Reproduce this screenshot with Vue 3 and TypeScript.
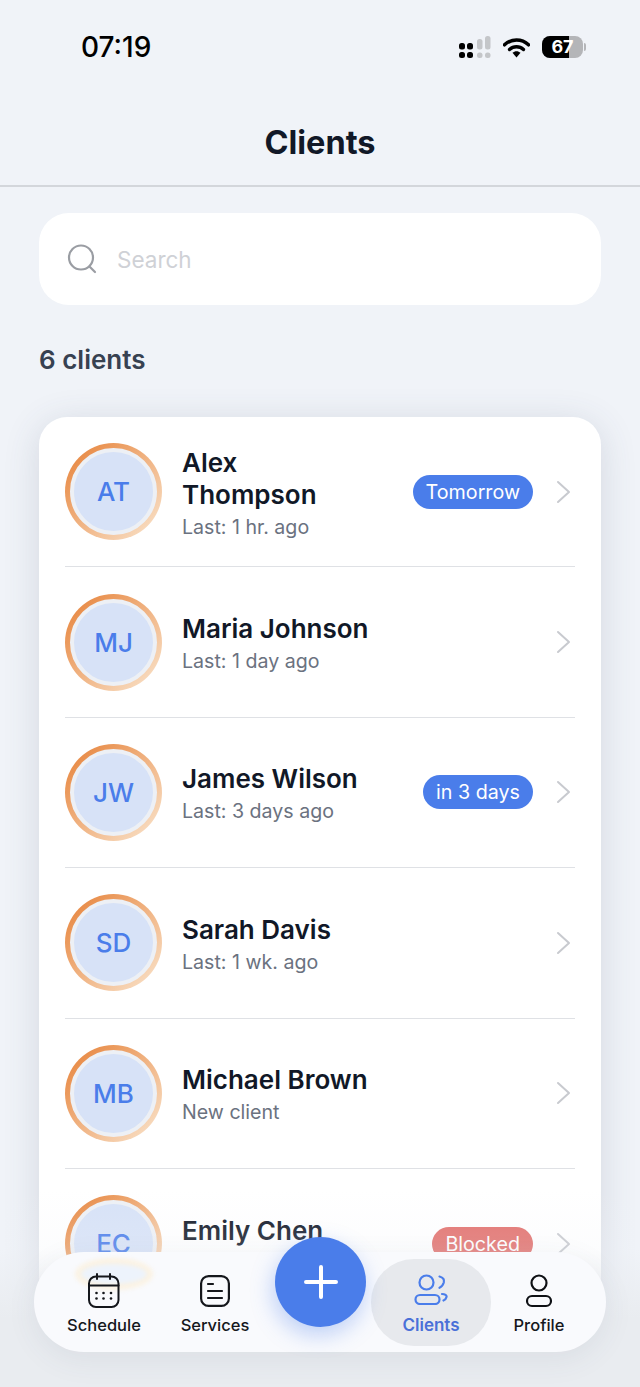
<template>
  <div class="screen">
    <div class="status-bar">
      <span class="time">07:19</span>
      <div class="status-icons">
        <svg width="32" height="22" viewBox="0 0 32 22">
          <rect x="0" y="7" width="6" height="6.500" rx="2.500" fill="#000" />
          <rect x="0" y="16" width="6" height="6" rx="2.500" fill="#000" />
          <rect x="8" y="7" width="6" height="6.500" rx="2.500" fill="#000" />
          <rect x="8" y="16" width="6" height="6" rx="2.500" fill="#000" />
          <rect x="18" y="3" width="5.500" height="10.500" rx="2.500" fill="#c4c6c9" />
          <rect x="18" y="16.500" width="5.500" height="5.500" rx="2.500" fill="#c4c6c9" />
          <rect x="26" y="0" width="5.500" height="13.500" rx="2.500" fill="#c4c6c9" />
          <rect x="26" y="16.500" width="5.500" height="5.500" rx="2.500" fill="#c4c6c9" />
        </svg>
        <svg width="27" height="21" viewBox="0 0 27 21">
          <path d="M1.500 7.800C8.200 1.300 18.800 1.300 25.500 7.800" fill="none" stroke="#000" stroke-width="3.500" stroke-linecap="round" />
          <path d="M6.500 12.500C10.400 8.800 16.600 8.800 20.500 12.500" fill="none" stroke="#000" stroke-width="3.300" stroke-linecap="round" />
          <path d="M9.500 15.800C11.800 13.700 15.200 13.700 17.500 15.800L13.500 20.500Z" fill="#000" />
        </svg>
        <div class="battery">
          <div class="battery-body">
            <div class="battery-fill" :style="{ width: battery + '%' }"></div>
            <span class="battery-num">{{ battery }}</span>
          </div>
          <span class="battery-cap"></span>
        </div>
      </div>
    </div>

    <header class="page-header">
      <h1>Clients</h1>
    </header>

    <main class="content">
      <div class="search">
        <svg width="30" height="30" viewBox="0 0 30 30" fill="none" stroke="#9a9da3" stroke-width="2.200" stroke-linecap="round">
          <circle cx="14" cy="13.500" r="12" />
          <path d="M23 23l5 5" />
        </svg>
        <span class="placeholder">Search</span>
      </div>

      <p class="count">{{ clients.length }} clients</p>

      <section class="card">
        <div v-for="c in clients" :key="c.initials" class="row">
          <div class="avatar">
            <div class="avatar-inner">{{ c.initials }}</div>
          </div>
          <div class="info">
            <div class="name">{{ c.name }}</div>
            <div class="last">{{ c.last }}</div>
          </div>
          <span v-if="c.badge" :class="['badge', c.blocked ? 'badge-red' : '']">{{ c.badge }}</span>
          <svg class="chevron" width="16" height="24" viewBox="0 0 16 24" fill="none" stroke="#c8cacf" stroke-width="2" stroke-linecap="round" stroke-linejoin="round">
            <path d="M2 2l11 10L2 22" />
          </svg>
        </div>
      </section>
    </main>

    <div class="fade"></div>

    <nav class="tabbar">
      <span class="glass-ring"></span>
      <div class="tab tab-schedule">
        <svg width="32" height="35" viewBox="0 0 32 35" fill="none" stroke="#15171c" stroke-width="2" stroke-linecap="round" stroke-linejoin="round">
          <rect x="1" y="3.500" width="29.500" height="30.500" rx="7" />
          <path d="M1 12.500h29.500M9 1v5M22 1v5" />
          <g fill="#15171c" stroke="none">
            <circle cx="8.500" cy="20" r="1.300" /><circle cx="15.500" cy="20" r="1.300" /><circle cx="23" cy="20" r="1.300" />
            <circle cx="8.500" cy="25.500" r="1.300" /><circle cx="15.500" cy="25.500" r="1.300" /><circle cx="23" cy="25.500" r="1.300" />
          </g>
        </svg>
        <span>Schedule</span>
      </div>
      <div class="tab tab-services">
        <svg width="30" height="32" viewBox="0 0 30 32" fill="none" stroke="#15171c" stroke-width="2.200" stroke-linecap="round">
          <rect x="1.100" y="1.100" width="27.800" height="29.800" rx="7.500" />
          <path d="M8 9h5M8 16h14M8 23h14" />
        </svg>
        <span>Services</span>
      </div>
      <div class="tab tab-clients">
        <svg width="34" height="31" viewBox="0 0 34 31" fill="none" stroke="#4a7dea" stroke-width="2.200" stroke-linecap="round">
          <circle cx="12.500" cy="8.500" r="7" />
          <rect x="1.500" y="21" width="24" height="9" rx="4.500" />
          <path d="M25.500 2.500C29.500 3.500 30.500 6 29.800 8.500C29 11 27.500 13 25.500 13.800" />
          <path d="M28 20C31 20 33 21.500 32.500 23C32 25 31 26 29.500 26.500" />
        </svg>
        <span>Clients</span>
      </div>
      <div class="tab tab-profile">
        <svg width="28" height="34" viewBox="0 0 28 34" fill="none" stroke="#0f1115" stroke-width="2.200">
          <circle cx="14" cy="9" r="7.500" />
          <rect x="2" y="22" width="24" height="10" rx="5" />
        </svg>
        <span>Profile</span>
      </div>
    </nav>

    <button class="fab" type="button" aria-label="Add client">
      <svg width="36" height="36" viewBox="0 0 36 36" stroke="#fff" stroke-width="4" stroke-linecap="round">
        <path d="M18 3v30M3 18h30" />
      </svg>
    </button>
  </div>
</template>

<script setup lang="ts">
interface Client {
  initials: string;
  name: string;
  last: string;
  badge?: string;
  blocked?: boolean;
}

const battery = 67;

// the last row's subtitle sits under the tab bar, so it stays empty
const clients: Client[] = [
  { initials: 'AT', name: 'Alex Thompson', last: 'Last: 1 hr. ago', badge: 'Tomorrow' },
  { initials: 'MJ', name: 'Maria Johnson', last: 'Last: 1 day ago' },
  { initials: 'JW', name: 'James Wilson', last: 'Last: 3 days ago', badge: 'in 3 days' },
  { initials: 'SD', name: 'Sarah Davis', last: 'Last: 1 wk. ago' },
  { initials: 'MB', name: 'Michael Brown', last: 'New client' },
  { initials: 'EC', name: 'Emily Chen', last: '', badge: 'Blocked', blocked: true },
];
</script>

<style>
html,
body {
  margin: 0;
  background: #f0f3f8;
}
</style>

<style scoped>
.screen {
  position: relative;
  width: 640px;
  height: 1387px;
  overflow: hidden;
  background: #f0f3f8;
  font-family: Inter, "Noto Sans", sans-serif;
  color: #111827;
}

.status-bar {
  height: 95px;
  box-sizing: border-box;
  padding: 30px 54px 0 81px;
  display: flex;
  justify-content: space-between;
  align-items: flex-start;
}

.time {
  font-size: 28px;
  line-height: 34px;
  font-weight: 500;
  color: #000;
}

.status-icons {
  display: flex;
  align-items: center;
  gap: 12px;
  padding-top: 6px;
}

.status-icons svg {
  display: block;
}

.battery {
  display: flex;
  align-items: center;
  gap: 1px;
}

.battery-body {
  position: relative;
  width: 41px;
  height: 22px;
  border-radius: 8px;
  background: #b4b5b8;
  overflow: hidden;
}

.battery-fill {
  height: 100%;
  background: #000;
}

.battery-num {
  position: absolute;
  inset: 0;
  text-align: center;
  font-size: 18px;
  line-height: 22px;
  font-weight: 700;
  color: #fff;
}

.battery-cap {
  width: 2px;
  height: 8px;
  border-radius: 0 2px 2px 0;
  background: #b4b5b8;
}

.page-header {
  height: 92px;
  box-sizing: border-box;
  border-bottom: 2px solid #d3d6db;
  text-align: center;
}

.page-header h1 {
  margin: 0;
  padding-top: 28px;
  font-size: 32.5px;
  line-height: 40px;
  font-weight: 700;
  color: #111827;
}

.content {
  padding: 26px 39px 0;
}

.search {
  height: 92px;
  box-sizing: border-box;
  padding: 0 28px;
  display: flex;
  align-items: center;
  gap: 20px;
  background: #fff;
  border-radius: 30px;
}

.placeholder {
  font-size: 22.5px;
  color: #cfd1d6;
}

.count {
  margin: 39px 0 41px;
  font-size: 26px;
  line-height: 32px;
  font-weight: 600;
  color: #374151;
}

.card {
  padding: 0 26px;
  background: #fff;
  border-radius: 28px;
  box-shadow: 0 6px 36px rgba(60, 72, 100, 0.16);
}

.row {
  height: 150.4px;
  box-sizing: border-box;
  display: flex;
  align-items: center;
  border-bottom: 1px solid #dfe1e5;
}

.avatar {
  flex: none;
  width: 97px;
  height: 97px;
  box-sizing: border-box;
  padding: 5px;
  border-radius: 50%;
  background: linear-gradient(135deg, #e88a45 10%, #f8dcc0 90%);
}

.avatar-inner {
  width: 87px;
  height: 87px;
  box-sizing: border-box;
  border: 4.5px solid #edf0f5;
  border-radius: 50%;
  background: #d7e2f7;
  display: flex;
  align-items: center;
  justify-content: center;
  font-size: 26px;
  font-weight: 500;
  color: #4a7dea;
}

.info {
  flex: 1;
  min-width: 0;
  margin-left: 20px;
  padding-top: 5px;
}

.name {
  max-width: 195px;
  font-size: 26px;
  line-height: 32px;
  font-weight: 600;
  color: #111827;
}

.last {
  margin-top: 1px;
  min-height: 30px;
  font-size: 19.6px;
  line-height: 30px;
  color: #6b7280;
}

.badge {
  flex: none;
  height: 34px;
  box-sizing: border-box;
  padding: 0 13px;
  border-radius: 17px;
  background: #4a7dea;
  font-size: 19.7px;
  line-height: 34px;
  color: #fff;
}

.badge-red {
  background: #e2706c;
}

.chevron {
  flex: none;
  margin-left: 23px;
  margin-right: 3px;
}

.fade {
  position: absolute;
  left: 0;
  right: 0;
  bottom: 0;
  height: 197px;
  background: linear-gradient(180deg, rgba(240, 243, 248, 0) 0%, rgba(240, 243, 248, 0.2) 30%, #e9ecf0 65%);
}

.tabbar {
  position: absolute;
  left: 34px;
  top: 1252px;
  width: 572px;
  height: 100px;
  border-radius: 50px;
  background: #f9fafd;
  box-shadow: 0 8px 30px rgba(60, 72, 100, 0.08);
  overflow: hidden;
}

.glass-ring {
  position: absolute;
  left: 41px;
  top: 6px;
  width: 66px;
  height: 20px;
  border: 6px solid #fbf2e2;
  border-radius: 50%;
  background: #edf3fc;
  filter: blur(2px);
}

.tab {
  position: absolute;
  top: 7px;
  height: 87px;
  display: flex;
  flex-direction: column;
  align-items: center;
  justify-content: flex-end;
  box-sizing: border-box;
  padding-bottom: 10px;
  font-size: 16.5px;
  line-height: 22px;
  font-weight: 500;
  color: #15171c;
}

.tab svg {
  margin-bottom: 6px;
}

.tab-schedule {
  left: 0;
  width: 140px;
}

.tab-services {
  left: 111px;
  width: 140px;
}

.tab-services svg {
  margin-bottom: 7px;
}

.tab-clients {
  left: 337px;
  width: 120px;
  border-radius: 43px;
  background: #e7e9ed;
  color: #4a70d8;
  font-size: 17px;
  font-weight: 600;
}

.tab-clients svg {
  margin-bottom: 9px;
}

.tab-profile {
  left: 445px;
  width: 120px;
}

.fab {
  position: absolute;
  left: 275px;
  top: 1237px;
  width: 91px;
  height: 90px;
  padding: 0;
  border: 0;
  border-radius: 50%;
  background: #4a7dea;
  box-shadow: -2px 8px 22px rgba(74, 125, 234, 0.35);
  display: flex;
  align-items: center;
  justify-content: center;
}
</style>
